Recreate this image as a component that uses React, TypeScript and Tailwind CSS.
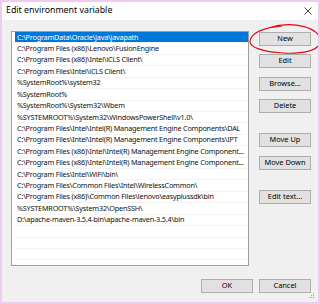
import React from 'react';

const paths = [
  'C:\\ProgramData\\Oracle\\Java\\javapath',
  'C:\\Program Files (x86)\\Lenovo\\FusionEngine',
  'C:\\Program Files (x86)\\Intel\\iCLS Client\\',
  'C:\\Program Files\\Intel\\iCLS Client\\',
  '%SystemRoot%\\system32',
  '%SystemRoot%',
  '%SystemRoot%\\System32\\Wbem',
  '%SYSTEMROOT%\\System32\\WindowsPowerShell\\v1.0\\',
  'C:\\Program Files\\Intel\\Intel(R) Management Engine Components\\DAL',
  'C:\\Program Files\\Intel\\Intel(R) Management Engine Components\\IPT',
  'C:\\Program Files (x86)\\Intel\\Intel(R) Management Engine Component...',
  'C:\\Program Files (x86)\\Intel\\Intel(R) Management Engine Component...',
  'C:\\Program Files\\Intel\\WiFi\\bin\\',
  'C:\\Program Files\\Common Files\\Intel\\WirelessCommon\\',
  'C:\\Program Files (x86)\\Common Files\\lenovo\\easyplussdk\\bin',
  '%SYSTEMROOT%\\System32\\OpenSSH\\',
  'D:\\apache-maven-3.5.4-bin\\apache-maven-3.5.4\\bin',
  '',
  '',
  '',
];

function Btn({ label, className = '' }: { label: string; className?: string }) {
  return (
    <div
      className={`flex h-[14px] w-[52px] items-center justify-center whitespace-nowrap border border-[#adadad] bg-[#e1e1e1] text-[7.4px] leading-none text-black ${className}`}
    >
      {label}
    </div>
  );
}

export default function App() {
  return (
    <div
      className="relative flex h-[304px] w-[320px] flex-col overflow-hidden border-2 border-[#f0cbee]"
      style={{ fontFamily: '"Noto Sans", "Open Sans", sans-serif' }}
    >
      {/* title bar */}
      <div className="flex h-[18px] items-center justify-between bg-white pl-[4px] pr-[6px]">
        <span className="text-[8.8px] text-black">Edit environment variable</span>
        <svg width="8" height="8" viewBox="0 0 8 8">
          <path d="M0.5 0.5 L7.5 7.5 M7.5 0.5 L0.5 7.5" stroke="#333" strokeWidth="0.9" />
        </svg>
      </div>

      {/* content */}
      <div className="flex flex-1 flex-col bg-[#f0f0f0] pl-[9px] pr-[7px] pt-[11px]">
        <div className="flex">
          <div className="h-[235px] w-[238px] overflow-hidden border border-[#a0a0a0] bg-white pl-[3px]">
            {paths.map((p, i) => (
              <div
                key={i}
                className={`flex h-[11.43px] items-center overflow-hidden whitespace-nowrap border-b border-[#f3f3f3] pl-[2px] text-[7.25px] leading-none tracking-[-0.2px] ${
                  i === 0 ? 'bg-[#0078d7] text-white' : 'text-[#111]'
                }`}
              >
                {p}
              </div>
            ))}
          </div>
          <div className="ml-[10px] flex flex-col pt-[1px]">
            <Btn label="New" />
            <Btn label="Edit" className="mt-[8px]" />
            <Btn label="Browse..." className="mt-[9px]" />
            <Btn label="Delete" className="mt-[8px]" />
            <Btn label="Move Up" className="mt-[20px]" />
            <Btn label="Move Down" className="mt-[9px]" />
            <Btn label="Edit text..." className="mt-[20px]" />
          </div>
        </div>
        <div className="mt-[13px] flex justify-end gap-[6px]">
          <Btn label="OK" className="border-[#0078d7]" />
          <Btn label="Cancel" />
        </div>
      </div>

      {/* size grip */}
      <svg className="absolute bottom-[3px] right-[3px]" width="6" height="6" viewBox="0 0 6 6">
        <rect x="4" y="0" width="1" height="1" fill="#a0a0a0" />
        <rect x="2" y="2" width="1" height="1" fill="#a0a0a0" />
        <rect x="4" y="2" width="1" height="1" fill="#a0a0a0" />
        <rect x="0" y="4" width="1" height="1" fill="#a0a0a0" />
        <rect x="2" y="4" width="1" height="1" fill="#a0a0a0" />
        <rect x="4" y="4" width="1" height="1" fill="#a0a0a0" />
      </svg>

      {/* red annotation */}
      <svg className="pointer-events-none absolute left-0 top-0" width="320" height="304" viewBox="0 0 320 304">
        <path
          d="M266 26 C292 18 319 26 318 39 C318 49 300 52 281 51 C261 50 247 45 248 39 C249 32 259 26 280 24"
          fill="none"
          stroke="#e30613"
          strokeWidth="1.1"
        />
      </svg>
    </div>
  );
}
